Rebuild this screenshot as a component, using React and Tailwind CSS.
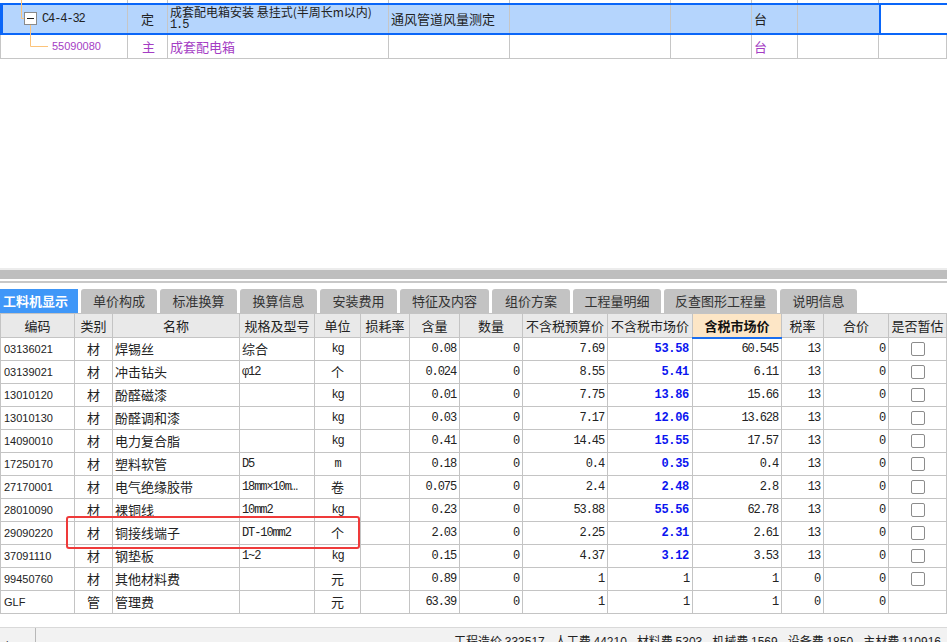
const CJK = "font-['Noto_Sans_CJK_SC','Microsoft_YaHei',sans-serif]";
const MONO = "font-['Liberation_Mono','Noto_Sans_CJK_SC',monospace] text-[12px] tracking-[-1.1px]";
const CODE = "font-['Liberation_Sans','Noto_Sans_CJK_SC',sans-serif] text-[11px]";

const topWidths = [128, 40, 221, 121, 161, 81, 46, 81];

const tabs = [
  { label: '工料机显示', w: 78, active: true },
  { label: '单价构成', w: 76 },
  { label: '标准换算', w: 77 },
  { label: '换算信息', w: 77 },
  { label: '安装费用', w: 77 },
  { label: '特征及内容', w: 89 },
  { label: '组价方案', w: 78 },
  { label: '工程量明细', w: 88 },
  { label: '反查图形工程量', w: 113 },
  { label: '说明信息', w: 77 },
];

const columns = [
  { label: '编码', w: 74 },
  { label: '类别', w: 38 },
  { label: '名称', w: 127 },
  { label: '规格及型号', w: 75 },
  { label: '单位', w: 46 },
  { label: '损耗率', w: 49 },
  { label: '含量', w: 50 },
  { label: '数量', w: 63 },
  { label: '不含税预算价', w: 85 },
  { label: '不含税市场价', w: 85 },
  { label: '含税市场价', w: 89, hot: true },
  { label: '税率', w: 42 },
  { label: '合价', w: 65 },
  { label: '是否暂估', w: 58 },
];

const rows = [
  ['03136021', '材', '焊锡丝', '综合', 'kg', '0.08', '0', '7.69', '53.58', '60.545', '13', '0', true],
  ['03139021', '材', '冲击钻头', 'φ12', '个', '0.024', '0', '8.55', '5.41', '6.11', '13', '0', true],
  ['13010120', '材', '酚醛磁漆', '', 'kg', '0.01', '0', '7.75', '13.86', '15.66', '13', '0', true],
  ['13010130', '材', '酚醛调和漆', '', 'kg', '0.03', '0', '7.17', '12.06', '13.628', '13', '0', true],
  ['14090010', '材', '电力复合脂', '', 'kg', '0.41', '0', '14.45', '15.55', '17.57', '13', '0', true],
  ['17250170', '材', '塑料软管', 'D5', 'm', '0.18', '0', '0.4', '0.35', '0.4', '13', '0', true],
  ['27170001', '材', '电气绝缘胶带', '18mm×10m…', '卷', '0.075', '0', '2.4', '2.48', '2.8', '13', '0', true],
  ['28010090', '材', '裸铜线', '10mm2', 'kg', '0.23', '0', '53.88', '55.56', '62.78', '13', '0', true],
  ['29090220', '材', '铜接线端子', 'DT-10mm2', '个', '2.03', '0', '2.25', '2.31', '2.61', '13', '0', true],
  ['37091110', '材', '钢垫板', '1~2', 'kg', '0.15', '0', '4.37', '3.12', '3.53', '13', '0', true],
  ['99450760', '材', '其他材料费', '', '元', '0.89', '0', '1', '1', '1', '0', '0', true],
  ['GLF', '管', '管理费', '', '元', '63.39', '0', '1', '1', '1', '0', '0', false],
];

const status = [
  ['工程造价', '333517'],
  ['人工费', '44210'],
  ['材料费', '5303'],
  ['机械费', '1569'],
  ['设备费', '1850'],
  ['主材费', '110916'],
];

function TopTable() {
  return (
    <div className="relative h-[59px]">
      {/* strip above selected row */}
      <div className="flex h-[3px]">
        {topWidths.map((w, i) => (
          <div key={i} style={{ width: w }} className="border-r border-[#c6c6c6]" />
        ))}
      </div>

      <div className="flex h-[32px] border-y-2 border-[#0a66f8]">
        <div className="flex bg-[#b5d5fd] border-l-[3px] border-r-2 border-[#0a66f8] w-[881px]">
          <div className="w-[125px] border-r border-[#c6c6c6] flex items-center pl-[39px]">
            <span className="font-['Liberation_Mono',monospace] text-[12px] tracking-[-1.1px] text-[#222]">C4-4-32</span>
          </div>
          <div className={`w-[40px] border-r border-[#c6c6c6] flex items-center justify-center text-[13px] text-[#222] ${CJK}`}>定</div>
          <div className={`w-[221px] border-r border-[#c6c6c6] pl-[2px] text-[#222] whitespace-nowrap overflow-hidden ${CJK}`}>
            <div className="text-[12px] leading-[14px]">成套配电箱安装 悬挂式(半周长m以内)</div>
            <div className="font-['Liberation_Mono',monospace] text-[12px] leading-[12px] tracking-[-1.1px]">1.5</div>
          </div>
          <div className={`w-[121px] border-r border-[#c6c6c6] flex items-center pl-[2px] text-[13px] text-[#222] whitespace-nowrap overflow-hidden ${CJK}`}>通风管道风量测定</div>
          <div className="w-[161px] border-r border-[#c6c6c6]" />
          <div className="w-[81px] border-r border-[#c6c6c6]" />
          <div className={`w-[46px] border-r border-[#c6c6c6] flex items-center pl-[2px] text-[13px] text-[#222] ${CJK}`}>台</div>
          <div className="w-[79px]" />
        </div>
        <div className="flex-1 bg-white" />
      </div>

      <div className="flex h-[24px] border-b border-[#c6c6c6]">
        {topWidths.map((w, i) => (
          <div
            key={i}
            style={{ width: w }}
            className={`border-r border-[#c6c6c6] flex items-center ${i === 0 ? 'border-l pl-[51px]' : 'pl-[2px]'} ${i === 1 ? 'justify-center pl-0' : ''}`}
          >
            {i === 0 && <span className={`${CODE} text-[#a43dc4]`}>55090080</span>}
            {i === 1 && <span className={`${CJK} text-[13px] text-[#a43dc4]`}>主</span>}
            {i === 2 && <span className={`${CJK} text-[13px] text-[#a43dc4]`}>成套配电箱</span>}
            {i === 6 && <span className={`${CJK} text-[13px] text-[#a43dc4]`}>台</span>}
          </div>
        ))}
        <div className="flex-1 border-r border-[#c6c6c6]" />
      </div>

      {/* tree connector lines and collapse box */}
      <svg className="absolute left-0 top-0" width="60" height="58" viewBox="0 0 60 58">
        <path d="M21.5 0 V18.5 H24" stroke="#fcc37a" strokeWidth="1" fill="none" />
        <path d="M30.5 25 V46.5 H48" stroke="#fcc37a" strokeWidth="1" fill="none" />
        <rect x="24.5" y="12.5" width="12" height="12" fill="#fff" stroke="#8a8a8a" />
        <path d="M27 18.5 H34" stroke="#222" strokeWidth="1" />
      </svg>
    </div>
  );
}

function Tabs() {
  return (
    <div className="flex items-end gap-[3px] h-[24px]">
      {tabs.map((t) => (
        <div
          key={t.label}
          style={{ width: t.w }}
          className={
            t.active
              ? `h-[24px] bg-[#3f97f8] text-white font-bold text-[13px] flex items-center pl-[3px] ${CJK}`
              : `h-[24px] bg-[#c3c3c3] text-[#333] text-[13px] rounded-t-[3px] flex items-center justify-center ${CJK}`
          }
        >
          {t.label}
        </div>
      ))}
    </div>
  );
}

function Checkbox() {
  return <div className="mx-auto w-[14px] h-[14px] rounded-[2px] border border-[#8c8c8c] bg-white" />;
}

function MaterialTable() {
  return (
    <div className="relative">
      <table className="table-fixed border-collapse w-[947px]">
        <colgroup>
          {columns.map((c) => (
            <col key={c.label} style={{ width: c.w }} />
          ))}
          <col style={{ width: 1 }} />
        </colgroup>
        <thead>
          <tr className="h-[24px]">
            {columns.map((c) => (
              <th
                key={c.label}
                className={`border border-[#c4c4c4] p-0 text-[13px] ${CJK} ${
                  c.hot
                    ? 'bg-[#fde6c6] font-bold text-[#111] border-b-2 border-b-[#1a6ef0]'
                    : 'bg-[#e9e9e9] font-normal text-[#222]'
                }`}
              >
                {c.label}
              </th>
            ))}
          </tr>
        </thead>
        <tbody>
          {rows.map((r) => {
            const [code, kind, name, spec, unit, qty, num, pre, market, tax, rate, total, check] = r;
            const bold = market !== '1';
            return (
              <tr key={code} className="h-[23px] text-[#222]">
                <td className={`border border-[#c4c4c4] p-0 pl-[3px] ${CODE}`}>{code}</td>
                <td className={`border border-[#c4c4c4] p-0 text-center text-[13px] ${CJK}`}>{kind}</td>
                <td className={`border border-[#c4c4c4] p-0 pl-[2px] text-[13px] ${CJK}`}>{name}</td>
                <td className={`border border-[#c4c4c4] p-0 pl-[2px] whitespace-nowrap overflow-hidden ${spec === '综合' ? `text-[13px] ${CJK}` : MONO}`}>{spec}</td>
                <td className={`border border-[#c4c4c4] p-0 text-center ${unit === 'kg' || unit === 'm' ? MONO : `text-[13px] ${CJK}`}`}>{unit}</td>
                <td className="border border-[#c4c4c4] p-0" />
                <td className={`border border-[#c4c4c4] p-0 pr-[3px] text-right ${MONO}`}>{qty}</td>
                <td className={`border border-[#c4c4c4] p-0 pr-[3px] text-right ${MONO}`}>{num}</td>
                <td className={`border border-[#c4c4c4] p-0 pr-[3px] text-right ${MONO}`}>{pre}</td>
                <td
                  className={`border border-[#c4c4c4] p-0 pr-[3px] text-right ${
                    bold
                      ? "font-['Liberation_Mono',monospace] text-[12px] tracking-[-0.3px] font-bold text-[#0a14f0]"
                      : MONO
                  }`}
                >
                  {market}
                </td>
                <td className={`border border-[#c4c4c4] p-0 pr-[3px] text-right ${MONO}`}>{tax}</td>
                <td className={`border border-[#c4c4c4] p-0 pr-[3px] text-right ${MONO}`}>{rate}</td>
                <td className={`border border-[#c4c4c4] p-0 pr-[3px] text-right ${MONO}`}>{total}</td>
                <td className="border border-[#c4c4c4] p-0">{check && <Checkbox />}</td>
                <td className="p-0" />
              </tr>
            );
          })}
        </tbody>
      </table>
      {/* red highlight annotation */}
      <div className="absolute left-[66px] top-[203px] w-[294px] h-[33px] rounded-[3px] border-2 border-[#ef3a3a]" />
    </div>
  );
}

export default function App() {
  return (
    <div className="w-[947px] h-[642px] overflow-hidden bg-white flex flex-col">
      <TopTable />
      <div className="h-[209px]" />
      <div className="h-[2px] bg-[#ececec]" />
      <div className="h-[9px] bg-[#bebebe]" />
      <div className="h-[2px]" />
      <div className="h-[2px] bg-[#c8c8c8]" />
      <div className="h-[6px]" />
      <Tabs />
      <MaterialTable />
      <div className="flex-1 min-h-[13px]" />
      <div className="h-[15px] border-t border-[#d9d9d9] bg-[#f2f2f2] flex items-start overflow-hidden">
        <div className="w-[36px] h-full border-r border-[#b8b8b8] pl-[1px] pt-[6px]">
          <span className={`text-[12px] text-[#222] ${CJK}`}>应</span>
        </div>
        <div className={`ml-auto flex gap-[10px] pr-[6px] pt-[6px] text-[12px] leading-[14px] text-[#222] ${CJK}`}>
          {status.map(([k, v]) => (
            <span key={k} className="whitespace-nowrap">
              {k} <span className="font-['Liberation_Sans',sans-serif]">{v}</span>
            </span>
          ))}
        </div>
      </div>
    </div>
  );
}
